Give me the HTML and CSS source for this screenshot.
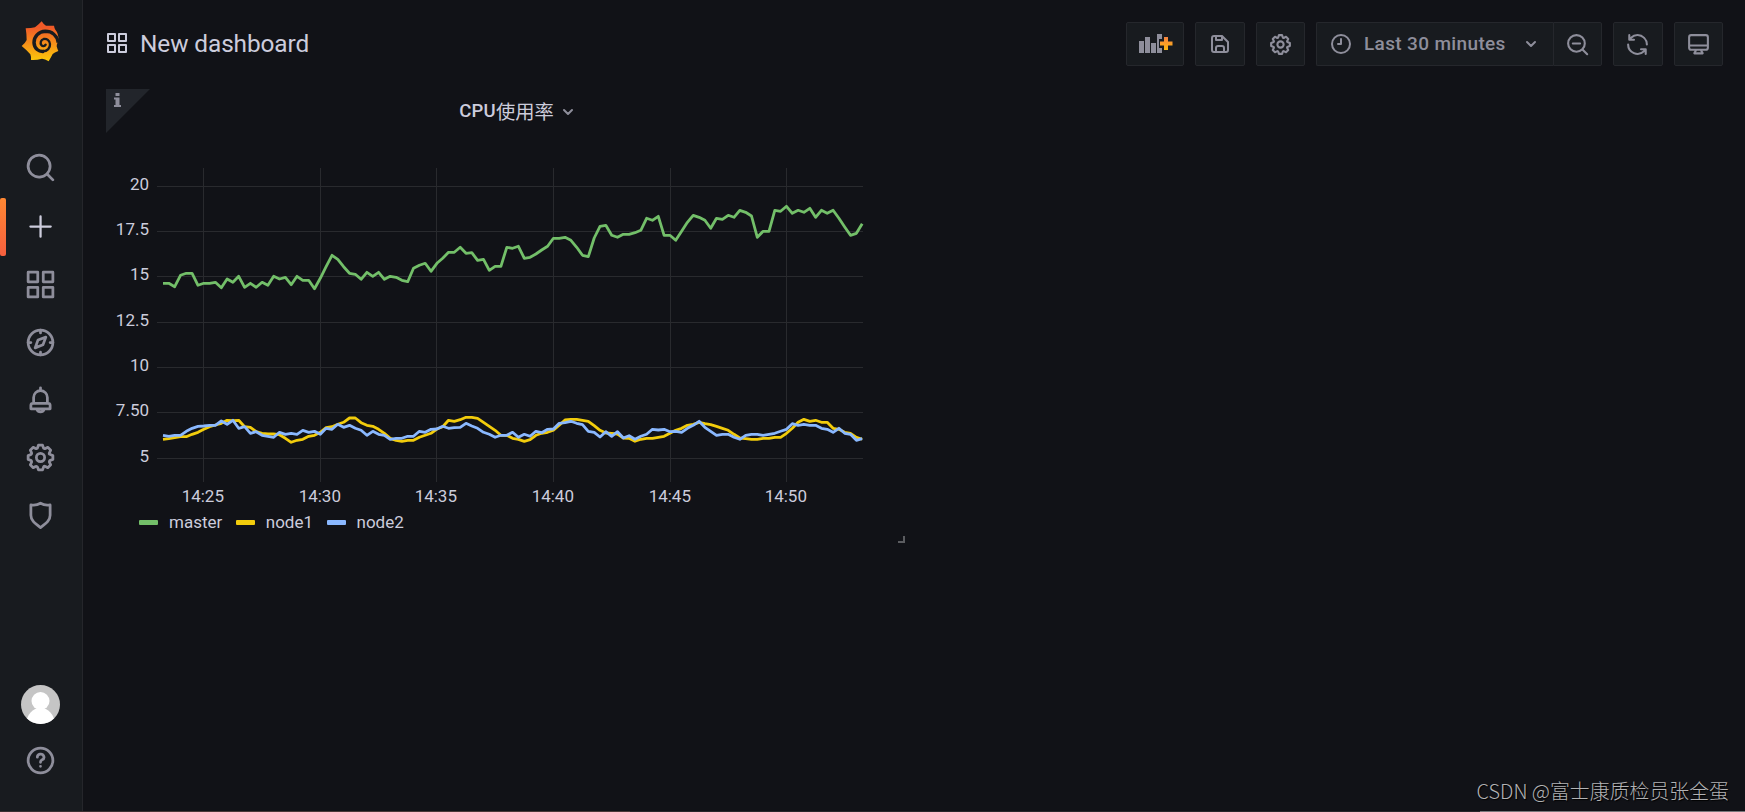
FILE: index.html
```html
<!DOCTYPE html>
<html lang="en">
<head>
  <meta charset="UTF-8" />
  <title>New dashboard - Grafana</title>
  <link rel="stylesheet" href="styles.css">
</head>
<body>
  <svg class="defs" width="0" height="0">
    <symbol id="i-apps" viewBox="0 0 24 24"><path d="M10,13H3a1,1,0,0,0-1,1v7a1,1,0,0,0,1,1h7a1,1,0,0,0,1-1V14A1,1,0,0,0,10,13ZM9,20H4V15H9ZM21,2H14a1,1,0,0,0-1,1v7a1,1,0,0,0,1,1h7a1,1,0,0,0,1-1V3A1,1,0,0,0,21,2ZM20,9H15V4h5Zm1,4H14a1,1,0,0,0-1,1v7a1,1,0,0,0,1,1h7a1,1,0,0,0,1-1V14A1,1,0,0,0,21,13Zm-1,7H15V15h5ZM10,2H3A1,1,0,0,0,2,3v7a1,1,0,0,0,1,1h7a1,1,0,0,0,1-1V3A1,1,0,0,0,10,2ZM9,9H4V4H9Z"/></symbol>
    <symbol id="i-cog" viewBox="0 0 24 24"><path d="M21.32,9.55l-1.89-.63.89-1.78A1,1,0,0,0,20.13,6L18,3.87a1,1,0,0,0-1.15-.19l-1.78.89-.63-1.89A1,1,0,0,0,13.5,2h-3a1,1,0,0,0-.95.68L8.92,4.57,7.14,3.68A1,1,0,0,0,6,3.87L3.87,6a1,1,0,0,0-.19,1.15l.89,1.78-1.89.63A1,1,0,0,0,2,10.5v3a1,1,0,0,0,.68.95l1.89.63-.89,1.78A1,1,0,0,0,3.87,18L6,20.13a1,1,0,0,0,1.15.19l1.78-.89.63,1.89a1,1,0,0,0,.95.68h3a1,1,0,0,0,.95-.68l.63-1.89,1.78.89A1,1,0,0,0,18,20.13L20.13,18a1,1,0,0,0,.19-1.15l-.89-1.78,1.89-.63A1,1,0,0,0,22,13.5v-3A1,1,0,0,0,21.32,9.55ZM20,12.78l-1.2.4A2,2,0,0,0,17.64,16l.57,1.14-1.1,1.1L16,17.64a2,2,0,0,0-2.79,1.16l-.4,1.2H11.22l-.4-1.2A2,2,0,0,0,8,17.64l-1.14.57-1.1-1.1L6.36,16A2,2,0,0,0,5.2,13.18L4,12.78V11.22l1.2-.4A2,2,0,0,0,6.36,8L5.79,6.89l1.1-1.1L8,6.36A2,2,0,0,0,10.82,5.2l.4-1.2h1.56l.4,1.2A2,2,0,0,0,16,6.36l1.14-.57,1.1,1.1L17.64,8a2,2,0,0,0,1.16,2.79l1.2.4ZM12,8a4,4,0,1,0,4,4A4,4,0,0,0,12,8Zm0,6a2,2,0,1,1,2-2A2,2,0,0,1,12,14Z"/></symbol>
  </svg>

  <div class="app">
    <nav class="sidemenu">
      <a class="logo" href="#">
        <svg width="38" height="41" viewBox="64 62 114 123">
          <linearGradient id="flame" x1="0" y1="0" x2="0" y2="1">
            <stop offset=".15" stop-color="#f05a28" />
            <stop offset="1" stop-color="#fbca0a" />
          </linearGradient>
          <path fill="url(#flame)" d="M126 63Q132 73 139 76Q150 77 163 76Q164 83 167 88Q177 99 177 122Q171 130 171 138Q173 146 176 152Q164 156 159 161Q154 171 147 183Q136 176 127 175Q111 180 94 179Q95 169 92 162Q81 149 66 137Q77 128 81 119Q81 102 78 84Q95 84 106 81Q117 73 126 63Z" />
          <path class="swirl-outer" d="M176 127C172 105 156 93 137 93C116 94 103 109 103 127C104 145 117 155 133 153" />
          <path class="swirl-inner" d="M130 153C143 153 152 143 151 131C150 120 141 114 132 116C123 119 121 128 125 134C129 139 135 138 138 133" />
        </svg>
      </a>
      <div class="menu top">
        <a class="item" href="#"><svg class="icon" viewBox="0 0 24 24"><path d="M21.71,20.29,18,16.61A9,9,0,1,0,16.61,18l3.68,3.68a1,1,0,0,0,1.42,0A1,1,0,0,0,21.71,20.29ZM11,18a7,7,0,1,1,7-7A7,7,0,0,1,11,18Z"/></svg></a>
        <a class="item active" href="#"><svg class="icon" viewBox="0 0 24 24"><path d="M21,11H13V3a1,1,0,0,0-2,0v8H3a1,1,0,0,0,0,2h8v8a1,1,0,0,0,2,0V13h8a1,1,0,0,0,0-2Z" transform="translate(2.2 2.2) scale(.82)"/></svg></a>
        <a class="item" href="#"><svg class="icon"><use href="#i-apps" /></svg></a>
        <a class="item" href="#"><svg class="icon line" viewBox="0 0 24 24"><circle cx="12" cy="12" r="9"/><path d="M12 3v2M12 19v2M3 12h2M19 12h2M15.9 8.1l-2.1 5.6-5.7 2.2 2.1-5.7z"/></svg></a>
        <a class="item" href="#"><svg class="icon line" viewBox="0 0 24 24"><path d="M12 2.8V4.5M7 14V9.8a5 5 0 0 1 10 0V14M6.500 14h11a1.500 1.500 0 0 1 1.500 1.500V18H5v-2.500A1.500 1.500 0 0 1 6.500 14zM9.400 18.500a2.800 2.800 0 0 0 5.200 0"/></svg></a>
        <a class="item" href="#"><svg class="icon"><use href="#i-cog" /></svg></a>
        <a class="item" href="#"><svg class="icon line" viewBox="0 0 24 24"><path d="M5 4.300c2.500.5 5 0 7-1.200 2 1.200 4.500 1.700 7 1.200v7.600c0 3.400-2.300 5.500-7 8.900-4.700-3.400-7-5.500-7-8.900z"/></svg></a>
      </div>
      <div class="menu bottom">
        <a class="avatar" href="#">
          <svg width="39" height="39" viewBox="0 0 39 39">
            <clipPath id="round"><circle cx="19.5" cy="19.5" r="19.5" /></clipPath>
            <g clip-path="url(#round)">
              <rect width="39" height="39" fill="#c5c5c5" />
              <circle cx="19.500" cy="16" r="9" fill="#fff" />
              <ellipse cx="19.500" cy="38" rx="14" ry="15" fill="#fff" />
            </g>
          </svg>
        </a>
        <a class="item" href="#"><svg class="icon line" viewBox="0 0 24 24"><circle cx="12" cy="12" r="9"/><path d="M9.700 9.600a2.400 2.200 0 1 1 3.500 1.900c-.8.4-1.200.8-1.200 1.500v.3M12 16.200v.05"/></svg></a>
      </div>
    </nav>

    <main class="content">
      <header class="toolbar">
        <svg class="title-icon"><use href="#i-apps" /></svg>
        <h1>New dashboard</h1>
        <div class="actions">
          <button class="btn add-panel">
            <svg width="34" height="20" viewBox="0 0 34 20">
              <linearGradient id="plus" x1="0" y1="0" x2="0" y2="1">
                <stop offset="0" stop-color="#f58140" />
                <stop offset="1" stop-color="#fcb810" />
              </linearGradient>
              <path class="bars" d="M0 7h5v12H0zM6 3h5v16H6zM12 9h5v10h-5zM18 0h5v5h-3v9h3v5h-5z" />
              <path fill="url(#plus)" d="M25 3h4v4.500h4.500v4H29V16h-4v-4.500h-4v-4h4z" />
            </svg>
          </button>
          <button class="btn save"><svg width="24" height="24" viewBox="0 0 24 24"><path d="M20.71,9.29l-6-6a1,1,0,0,0-.32-.21A1.09,1.09,0,0,0,14,3H6A3,3,0,0,0,3,6V18a3,3,0,0,0,3,3H18a3,3,0,0,0,3-3V10A1,1,0,0,0,20.71,9.29ZM9,5h4V7H9Zm6,14H9V16a1,1,0,0,1,1-1h4a1,1,0,0,1,1,1Zm4-1a1,1,0,0,1-1,1H17V16a3,3,0,0,0-3-3H10a3,3,0,0,0-3,3v3H6a1,1,0,0,1-1-1V6A1,1,0,0,1,6,5H7V8A1,1,0,0,0,8,9h6a1,1,0,0,0,1-1V6.41l4,4Z"/></svg></button>
          <button class="btn"><svg width="25" height="25"><use href="#i-cog" /></svg></button>
          <div class="btn-group">
            <button class="btn time">
              <svg class="line" width="24" height="24" viewBox="0 0 24 24"><circle cx="12" cy="12" r="9"/><path d="M12 7v5H9"/></svg>
              <span>Last 30 minutes</span>
              <svg class="line" width="12" height="8" viewBox="0 0 12 8"><path d="M2 2l4 4 4-4"/></svg>
            </button>
            <button class="btn zoom"><svg class="line" width="25" height="25" viewBox="0 0 24 24"><circle cx="11" cy="11" r="8"/><path d="M17 17l4.300 4.300M7.500 11h7"/></svg></button>
          </div>
          <button class="btn refresh"><svg width="25" height="25" viewBox="0 0 24 24"><path d="M19.91,15.51H15.38a1,1,0,0,0,0,2h2.4A8,8,0,0,1,4,12a1,1,0,0,0-2,0,10,10,0,0,0,16.88,7.23V21a1,1,0,0,0,2,0V16.5A1,1,0,0,0,19.91,15.51ZM12,2A10,10,0,0,0,5.12,4.77V3a1,1,0,0,0-2,0V7.5a1,1,0,0,0,1,1h4.500a1,1,0,0,0,0-2H6.22A8,8,0,0,1,20,12a1,1,0,0,0,2,0A10,10,0,0,0,12,2Z"/></svg></button>
          <button class="btn"><svg class="line" width="25" height="25" viewBox="0 0 24 24"><path d="M5 3h14a2 2 0 0 1 2 2v10a2 2 0 0 1-2 2H5a2 2 0 0 1-2-2V5a2 2 0 0 1 2-2zM3 13h18M9.500 17.500c0 1.200-1.500 1.500-1.500 3h8c0-1.500-1.500-1.800-1.500-3"/></svg></button>
        </div>
      </header>

      <section class="panel">
        <div class="panel-info"><svg width="7" height="14" viewBox="0 0 7 14"><path d="M1.500 0h4v3h-4zM0 4.500h5.500V12H7v2H0v-2h1.500V6.500H0z"/></svg></div>
        <h2 class="panel-title">CPU<span>使用率</span><svg class="line" width="12" height="8" viewBox="0 0 12 8"><path d="M2 2l4 4 4-4"/></svg></h2>
        <svg class="chart" id="chart" width="800" height="361" viewBox="106 150 800 361"></svg>
        <ul class="legend">
          <li><i class="master"></i>master</li>
          <li><i class="node1"></i>node1</li>
          <li><i class="node2"></i>node2</li>
        </ul>
        <span class="resize-handle"></span>
      </section>
    </main>
  </div>
  <div class="bottom-edge"></div>
  <div class="watermark">CSDN @富士康质检员张全蛋</div>
  <script src="chart.js"></script>
</body>
</html>
```
FILE: styles.css
```css
* { box-sizing: border-box; }
body { margin: 0; background: #111217; color: #ccccdc; font-family: Roboto, "Noto Sans CJK SC", sans-serif; font-size: 17px; overflow: hidden; }
svg { display: block; fill: currentColor; }
.defs { position: absolute; }
.line { fill: none; stroke: currentColor; stroke-width: 2; stroke-linecap: round; stroke-linejoin: round; }
.app { display: flex; height: 812px; }

/* side menu */
.sidemenu { display: flex; flex-direction: column; width: 83px; background: #181b1f; border-right: 1px solid #25262b; color: #8e8e9b; }
.sidemenu a { color: inherit; }
.logo { margin: 21px 0 0 21px; height: 117px; }
.swirl-outer { fill: none; stroke: #181b1f; stroke-width: 10.500; }
.swirl-inner { fill: none; stroke: #181b1f; stroke-width: 7; stroke-linecap: round; }
.item { position: relative; display: flex; align-items: center; justify-content: center; height: 58px; width: 81px; }
.icon { width: 33px; height: 33px; }
.top .item:nth-child(n+2):nth-child(-n+5) { padding-top: 2px; }
.item.active { color: #ccccdc; }
.item.active::before { content: ""; position: absolute; left: 0; top: 2px; width: 6px; height: 58px; border-radius: 2px; background: linear-gradient(#ff8833, #f55f3e); }
.bottom { margin-top: auto; padding-bottom: 23px; }
.avatar { display: block; margin: 0 0 7px 21px; }

/* top bar */
.content { flex: 1; min-width: 0; padding: 22px 22px 0 23px; }
.toolbar { display: flex; align-items: center; height: 44px; }
.title-icon { width: 24px; height: 24px; margin: -2px 11px 0 -1px; }
h1 { margin: -1px 0 0; font-size: 24.400px; font-weight: 400; line-height: 30px; letter-spacing: -.1px; }
.actions { display: flex; gap: 11px; margin-left: auto; color: #8e8e9b; }
.btn { display: flex; align-items: center; justify-content: center; width: 49px; height: 44px; padding: 0; color: inherit; background: #181b1f; border: 1px solid #25272c; border-radius: 2px; font: 500 18.500px Roboto, sans-serif; }
.add-panel { width: 58px; }
.add-panel svg { margin-left: 1px; }
.save, .refresh { width: 50px; }
.refresh svg { margin-left: -2px; }
.btn-group { display: flex; }
.time { width: 237px; justify-content: flex-start; padding-left: 12px; border-radius: 2px 0 0 2px; border-right: 0; font-size: 19px; letter-spacing: .35px; }
.time span { margin: -2px 19px 0 11px; }
.zoom { border-radius: 0 2px 2px 0; }

/* panel */
.panel { position: relative; width: 800px; height: 454px; margin-top: 23px; }
.panel-info { position: absolute; left: 0; top: 0; width: 44px; height: 44px; padding: 4px 0 0 8px; background: #22252b; color: #8e8e9b; clip-path: polygon(0 0, 100% 0, 0 100%); }
.panel-title { display: flex; align-items: center; justify-content: center; height: 43px; margin: 0 0 18px 21px; font-size: 18.500px; font-weight: 500; letter-spacing: .25px; }
.panel-title span { font-size: 19.300px; font-weight: 400; letter-spacing: 0; }
.panel-title svg { margin: 3px 0 0 8px; color: #8e8e9b; }
.chart text { fill: #ccccdc; font-size: 17px; }
.chart .grid { stroke: #292a2e; }
.chart polyline { fill: none; stroke-width: 2.800; stroke-linejoin: round; }
.legend { display: flex; gap: 13.500px; margin: 0 0 0 33px; padding: 0; list-style: none; line-height: 22px; }
.legend li { display: flex; align-items: center; }
.legend i { width: 19px; height: 5px; margin-right: 11px; border-radius: 1px; }
.master { background: #73bf69; }
.node1 { background: #f2cc0c; }
.node2 { background: #8ab8ff; }
.resize-handle { position: absolute; right: 1px; bottom: 0; width: 7px; height: 7px; border: solid #5b5c60; border-width: 0 2px 2px 0; }

.bottom-edge { position: absolute; left: 0; right: 0; bottom: 0; height: 1px; background: linear-gradient(90deg, #3a2f30 0 150px, #4a3837 150px 630px, #29272a 630px 1480px, #77777a 1480px); }
.watermark { position: absolute; right: 16px; bottom: 6px; color: #b3b3b5; font: 300 19.900px/30px "Noto Sans CJK SC", sans-serif; text-shadow: 1px 1px 1px #000; }
```
FILE: chart.js
```js
// samples every 15s, offsets in thirds of a pixel below each base line
const STEP = 17.48 / 3;
const series = [
  { color: '#73bf69', base: 160, data: [
    370,370,380,346,340,340,376,370,370,367,383,357,367,349,382,370,382,367,376,349,
    357,352,374,349,361,361,386,355,320,286,298,320,340,343,358,337,349,337,358,349,
    352,361,365,325,316,310,334,310,295,277,277,262,280,278,301,298,331,319,319,262,
    265,259,295,292,282,270,259,235,235,232,241,262,286,290,234,199,196,226,232,223,
    223,218,211,175,181,169,226,226,241,214,187,166,172,181,205,175,178,166,172,151,
    157,168,232,214,214,151,154,139,160,151,157,145,172,151,160,151,175,201,226,220,191] },
  { color: '#f2cc0c', base: 395, data: [
    133,131,128,125,125,118,112,103,95,90,85,76,77,76,95,97,110,115,117,117,
    119,130,142,136,133,124,121,112,98,95,88,82,69,69,83,91,94,103,115,130,
    136,139,136,136,127,121,115,102,95,76,79,74,67,67,70,82,94,106,121,121,
    130,133,139,134,121,115,112,106,91,75,73,73,76,79,92,106,114,115,117,129,
    130,139,133,130,130,127,124,115,106,100,91,88,82,86,89,94,100,106,118,129,
    131,133,133,130,130,127,127,115,100,82,73,79,76,82,82,100,103,112,115,127,133] },
  { color: '#8ab8ff', base: 395, data: [
    121,124,121,121,109,100,94,93,91,91,78,88,76,100,95,115,110,121,124,127,
    112,118,115,118,106,112,109,118,100,103,88,97,91,100,106,121,109,118,121,133,
    130,130,124,124,109,112,103,102,94,100,98,97,85,93,100,112,118,127,121,121,
    112,127,118,124,109,113,103,102,85,83,79,85,89,109,112,126,110,124,110,129,
    122,133,124,118,103,105,103,110,109,112,100,91,79,97,109,121,118,118,127,133,
    121,118,118,121,118,115,109,103,86,91,88,91,91,100,103,112,100,115,118,136,131] }
];
const yTicks = [['20', 186.5], ['17.5', 231.5], ['15', 276.5], ['12.5', 322.5], ['10', 367.5], ['7.50', 412.5], ['5', 458.5]];
const xTicks = [['14:25', 203.5], ['14:30', 320.5], ['14:35', 436.5], ['14:40', 553.5], ['14:45', 670.5], ['14:50', 786.5]];

let out = '';
for (const [label, y] of yTicks) {
  out += `<path class="grid" d="M157 ${y}H863"/><text x="149" y="${y + 3.5}" text-anchor="end">${label}</text>`;
}
for (const [label, x] of xTicks) {
  out += `<path class="grid" d="M${x} 168V482"/><text x="${x - 0.7}" y="502" text-anchor="middle">${label}</text>`;
}
for (const s of series) {
  const points = s.data.map((v, i) => `${(163 + i * STEP).toFixed(1)},${(s.base + v / 3).toFixed(1)}`);
  out += `<polyline stroke="${s.color}" points="${points.join(' ')}"/>`;
}
document.getElementById('chart').innerHTML = out;
```
